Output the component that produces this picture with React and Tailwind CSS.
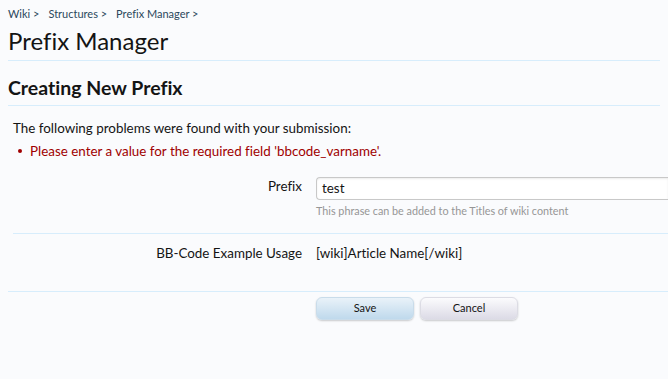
export default function App() {
  const font = { fontFamily: "Lato, 'Liberation Sans', sans-serif" };
  return (
    <div className="min-h-screen w-full overflow-hidden bg-[#fafbfd] text-[#141414] [font-variant-ligatures:none]" style={font}>
      <div className="px-2 pt-[7px]">
        <div className="flex gap-[9px] text-[11px] text-[#2b485c] leading-[14px]">
          <span>Wiki &gt;</span>
          <span>Structures &gt;</span>
          <span>Prefix Manager &gt;</span>
        </div>
        <h1 className="mt-[5px] text-[24px] leading-[30px] text-[#141414] pb-[4px] border-b border-[#d7edfc]">
          Prefix Manager
        </h1>
        <h2 className="mt-[14px] text-[19.5px] font-bold leading-[26px] text-[#141414] pb-[4px] border-b border-[#d7edfc]">
          Creating New Prefix
        </h2>
      </div>

      <div className="px-[13px] pt-[13px] text-[13.4px]">
        <div className="leading-[18px]">The following problems were found with your submission:</div>
        <ul className="mt-[5px] pl-[5px] text-[#a00000] leading-[18px]">
          <li className="flex items-center gap-[8px]">
            <span className="w-[4px] h-[4px] rounded-full bg-[#a00000]" />
            Please enter a value for the required field 'bbcode_varname'.
          </li>
        </ul>
      </div>

      <div className="pl-[13px] mt-[17px]">
        <div className="flex pb-[15px] border-b border-[#d7edfc]">
          <div className="w-[303px] shrink-0 text-right text-[13.4px] leading-[18px] text-[#141414] pr-[14px]">Prefix</div>
          <div className="flex-1">
            <div className="h-[23px] bg-white border border-[#c8c8c8] rounded-l-[4px] border-r-0 shadow-[inset_0_1px_2px_rgba(0,0,0,0.08)] flex items-center pl-[5px] text-[13.4px] text-[#141414]">
              test
            </div>
            <div className="mt-[4px] text-[10.8px] text-[#969696] leading-[14px]">
              This phrase can be added to the Titles of wiki content
            </div>
          </div>
        </div>
        <div className="flex py-[10px]">
          <div className="w-[303px] shrink-0 text-right text-[13.4px] pr-[14px] leading-[18px]">BB-Code Example Usage</div>
          <div className="text-[13.4px] leading-[18px]">[wiki]Article Name[/wiki]</div>
        </div>
      </div>

      <div className="pl-2 mt-[19px]">
        <div className="border-t border-[#d7edfc] pt-[5px] pl-[308px] flex gap-[6px]">
          <button className="w-[98px] h-[23px] rounded-[6px] text-[11px] text-[#141414] bg-gradient-to-b from-[#e9f2f9] to-[#bfd9ec] border border-[#c9dcea] shadow-[0_1px_2px_rgba(0,0,0,0.2)]">
            Save
          </button>
          <button className="w-[98px] h-[23px] rounded-[6px] text-[11px] text-[#141414] bg-gradient-to-b from-[#fbfbfd] to-[#dcdbe6] border border-[#dcdce4] shadow-[0_1px_2px_rgba(0,0,0,0.2)]">
            Cancel
          </button>
        </div>
      </div>
    </div>
  );
}
